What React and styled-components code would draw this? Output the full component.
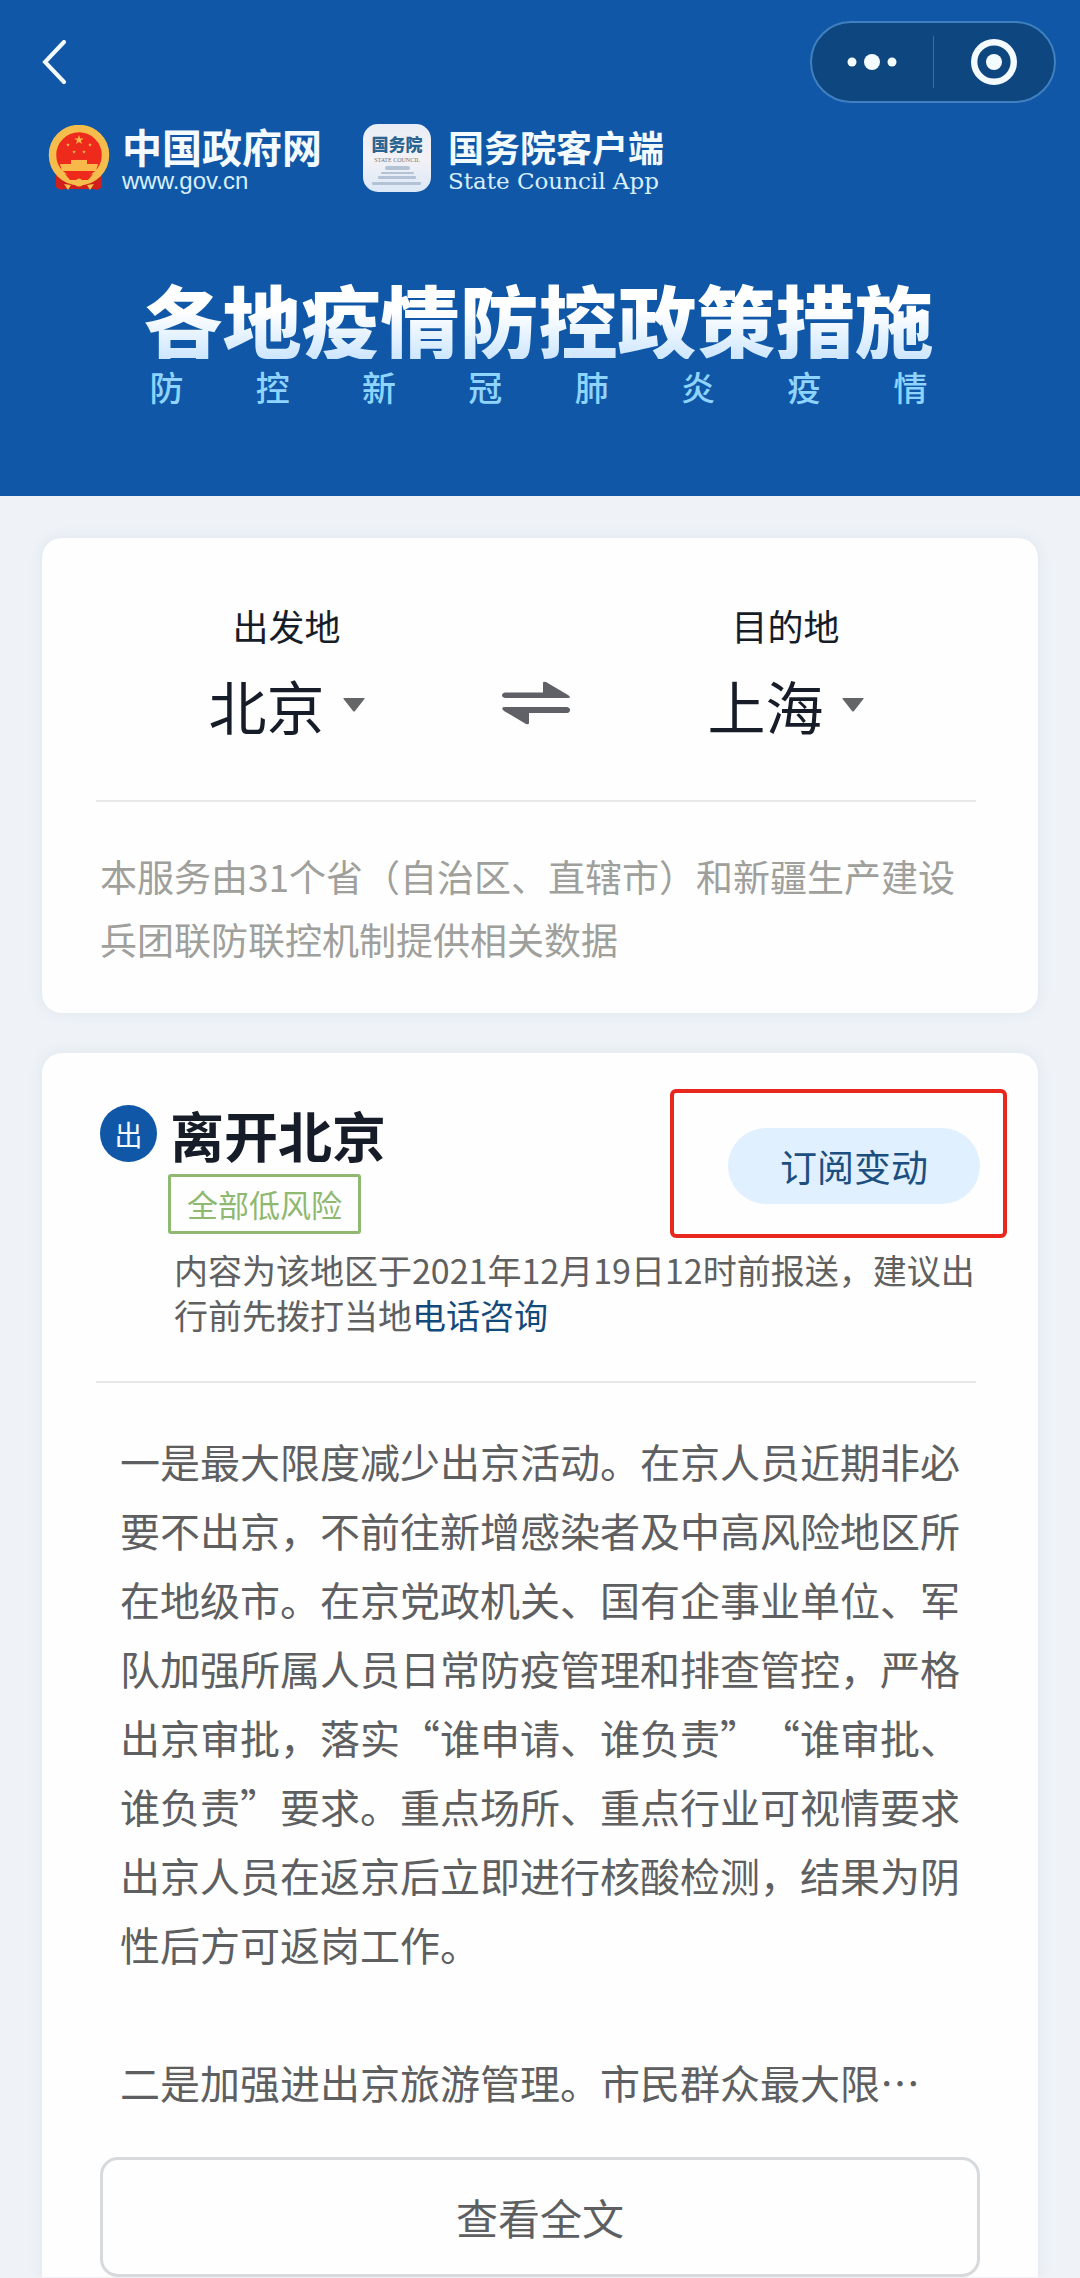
import React from 'react';
import styled, { createGlobalStyle } from 'styled-components';

const GlobalStyle = createGlobalStyle`
    * {
        box-sizing: border-box;
    }

    body {
        margin: 0;
        background-color: #eff3f8;
        color: #161d28;
        font-family: "Noto Sans CJK SC", "Noto Sans", sans-serif;
        text-spacing-trim: space-all;
    }

    button {
        font-family: inherit;
        cursor: pointer;
    }

    h1, h2, p {
        margin: 0;
    }
`;

const Header = styled.header`
    padding: 21px 24px 87px 42px;
    background-color: #1058a7;
    color: #f4fbff;
`;

const NavBar = styled.nav`
    display: flex;
    align-items: center;
    justify-content: space-between;
`;

const IconButton = styled.button`
    display: flex;
    align-items: center;
    justify-content: center;
    padding: 0;
    border: none;
    background: none;
    color: inherit;
`;

const Capsule = styled.div`
    display: flex;
    align-items: center;
    width: 246px;
    height: 82px;
    border: 2px solid #4080c0;
    border-radius: 41px;
    background-color: #0e467f;

    ${IconButton} {
        flex: 1;
        height: 52px;
    }

    ${IconButton} + ${IconButton} {
        border-left: 1px solid #3a6c9f;
    }
`;

const Brands = styled.div`
    display: flex;
    align-items: center;
    height: 68px;
    margin-top: 21px;
    padding-left: 6px;
`;

const Brand = styled.div`
    display: flex;
    align-items: center;
    gap: ${props => props.$gap}px;
    margin-right: 41px;
`;

const BrandText = styled.div`
    padding-top: 4px;
`;

const BrandName = styled.div`
    font-size: ${props => props.$size}px;
    font-weight: 700;
    line-height: 42px;
`;

const BrandSub = styled.div`
    font-family: ${props => (props.$serif ? '"DejaVu Serif", serif' : '"Liberation Sans", sans-serif')};
    font-size: ${props => (props.$serif ? 23 : 24)}px;
    line-height: 28px;
    color: #d8efff;
`;

const Banner = styled.div`
    display: flex;
    flex-direction: column;
    align-items: center;
    gap: 6px;
    margin-top: 87px;
    padding-right: 21px;
`;

const BannerTitle = styled.h1`
    font-size: 79px;
    font-weight: 900;
    line-height: 80px;
    color: transparent;
    background: linear-gradient(#ffffff 40%, #cde6ff);
    background-clip: text;
`;

const BannerSub = styled.p`
    display: flex;
    justify-content: space-between;
    width: 778px;
    font-size: 34px;
    font-weight: 500;
    line-height: 44px;
    color: #8fd4ff;
`;

const Main = styled.main`
    display: flex;
    flex-direction: column;
    gap: 40px;
    padding: 42px 42px 0;
`;

const Card = styled.section`
    padding: ${props => props.$padding};
    border-radius: ${props => (props.$open ? '20px 20px 0 0' : '20px')};
    background-color: #fefefe;
    box-shadow: 0 0 12px 2px rgba(205, 215, 228, 0.4);
`;

const Divider = styled.hr`
    height: 2px;
    margin: 0 4px 0 -4px;
    border: none;
    background-color: #e6e8ea;
`;

const Route = styled.div`
    display: grid;
    grid-template-columns: 1fr 126px 1fr;
    align-items: end;
    padding: 0 8px 59px 0;
`;

const Place = styled.div`
    display: flex;
    flex-direction: column;
    align-items: center;
    gap: 20px;
    font-size: 36px;
    line-height: 48px;
`;

const PlaceButton = styled.button`
    display: flex;
    align-items: center;
    gap: 18px;
    padding: 0;
    border: none;
    background: none;
    color: inherit;
    font-size: 58px;
    line-height: 72px;
`;

const SwapButton = styled(IconButton)`
    height: 76px;
    color: #606166;
`;

const Notice = styled.p`
    padding-top: 43px;
    font-size: 37px;
    line-height: 63px;
    color: #9f9f9b;
`;

const PolicyHead = styled.div`
    display: grid;
    grid-template-columns: 57px 1fr;
    column-gap: 11px;
    padding-bottom: 44px;
`;

const DirectionMark = styled.span`
    display: flex;
    align-items: center;
    justify-content: center;
    width: 57px;
    height: 57px;
    border-radius: 50%;
    background-color: #1058a7;
    color: #f4fbff;
    font-size: 28px;
    line-height: 40px;
`;

const TitleRow = styled.div`
    display: flex;
    justify-content: space-between;
    align-items: flex-start;
`;

const PolicyTitle = styled.h2`
    padding-left: 2px;
    font-size: 54px;
    font-weight: 700;
    line-height: 60px;
`;

const RiskTag = styled.span`
    display: inline-block;
    margin-top: 9px;
    padding: 6px 16px;
    border: 3px solid #8fb870;
    border-radius: 3px;
    color: #8fb870;
    font-size: 31px;
    line-height: 42px;
`;

const SubscribeArea = styled.div`
    position: relative;
    margin-top: 23px;
`;

const SubscribeButton = styled.button`
    width: 252px;
    height: 76px;
    padding: 0;
    border: none;
    border-radius: 38px;
    background-color: #e0f0ff;
    color: #1c4f7f;
    font-size: 37px;
    line-height: 48px;
`;

const Highlight = styled.div`
    position: absolute;
    inset: -39px -27px -34px -58px;
    border: 4px solid #e8281f;
    border-radius: 6px;
    pointer-events: none;
`;

const ReportNote = styled.p`
    padding: 13px 0 0 6px;
    font-size: 34px;
    line-height: 45px;
    color: #606060;
`;

const PhoneLink = styled.a`
    color: #134a7c;
    text-decoration: none;
`;

const Article = styled.div`
    padding: 44px 20px 40px;
    font-size: 40px;
    line-height: 69px;
    color: #5e5f61;

    p + p {
        margin-top: 69px;
    }
`;

const MoreButton = styled.button`
    display: block;
    width: 100%;
    height: 120px;
    padding: 0;
    border: 3px solid #d6dadd;
    border-radius: 18px;
    background-color: #fefefe;
    color: #5e5f61;
    font-size: 42px;
    line-height: 56px;
`;

const BackIcon = () => (
    <svg width="25" height="44" viewBox="0 0 25 44" fill="none" stroke="currentColor" strokeWidth="4" strokeLinecap="round">
        <path d="M22 2 3 22l19 20" />
    </svg>
)

const MoreIcon = () => (
    <svg width="50" height="18" viewBox="0 0 50 18" fill="currentColor">
        <circle cx="5" cy="9" r="4.5" />
        <circle cx="25" cy="9" r="8" />
        <circle cx="45" cy="9" r="4.5" />
    </svg>
)

const CloseIcon = () => (
    <svg width="46" height="46" viewBox="0 0 46 46">
        <circle cx="23" cy="23" r="19.8" fill="none" stroke="currentColor" strokeWidth="6.4" />
        <circle cx="23" cy="23" r="8" fill="currentColor" />
    </svg>
)

const CaretIcon = () => (
    <svg width="22" height="14" viewBox="0 0 22 14" fill="#646567">
        <path d="M1 0h20q1 0 .4 1L12 13q-1 1-2 0L.6 1Q0 0 1 0z" />
    </svg>
)

const SwapIcon = () => (
    <svg width="68" height="44" viewBox="0 0 68 44" fill="currentColor">
        <path d="M3 11.500h38V2q0-2 3-1l22 13q4 3 0 3H3q-3-.5-3-2.700t3-2.800z" />
        <path d="M65 32H27v10q0 2-3 1L2 30q-4-4 1-4h62q3 .5 3 3t-3 3z" />
    </svg>
)

const star = (cx, cy, r) => {
    const points = []
    for (let i = 0; i < 10; i++) {
        const radius = i % 2 ? r * 0.4 : r
        const angle = (Math.PI / 5) * i - Math.PI / 2
        points.push(`${cx + radius * Math.cos(angle)},${cy + radius * Math.sin(angle)}`)
    }
    return points.join(' ')
}

const EmblemIcon = () => (
    <svg width="62" height="66" viewBox="0 0 62 66">
        <path d="M8 46h46v16q-4 4-8 2H16q-4 2-8-2z" fill="#d0201c" />
        <circle cx="31" cy="30" r="26.500" fill="#ee2a1d" stroke="#f5bd4c" strokeWidth="7.500" />
        <g fill="#f9b94a">
            <polygon points={star(31, 15, 5)} />
            <polygon points={star(20, 20, 2)} />
            <polygon points={star(42, 20, 2)} />
            <polygon points={star(26, 27, 2)} />
            <polygon points={star(36, 27, 2)} />
            <path d="M23 35h16v4h11l-2 7H14l-2-7h11z" />
        </g>
        <path d="M17 49q14 4 28 0l-5 6H22z" fill="#ee2a1d" />
        <path d="M20 57l7-1q4-5 8 0l7 1-7 3q-4 3-8 0z" fill="#f5bd4c" />
        <path d="M16 59l7 1-3 5zM46 59l-7 1 3 5z" fill="#f5bd4c" />
    </svg>
)

const CouncilIcon = () => (
    <svg width="68" height="68" viewBox="0 0 68 68">
        <defs>
            <linearGradient id="council" x1="0" y1="0" x2="0" y2="1">
                <stop offset="0" stopColor="#e9edf5" />
                <stop offset="0.5" stopColor="#f3f2f6" />
                <stop offset="1" stopColor="#dce8f7" />
            </linearGradient>
        </defs>
        <rect width="68" height="68" rx="15" fill="url(#council)" />
        <text x="34" y="27" textAnchor="middle" fontSize="17" fontWeight="900" fill="#2b6590">国务院</text>
        <text x="34" y="38" textAnchor="middle" fontSize="6" fontFamily="Liberation Serif, serif" fill="#6d7580">STATE COUNCIL</text>
        <g fill="#b4c2d6">
            <rect x="22" y="42" width="25" height="4" rx="2" />
            <rect x="18" y="48" width="33" height="2" rx="1" />
            <rect x="15" y="52" width="38" height="3" rx="1" />
            <rect x="9" y="58" width="49" height="3" rx="1" />
        </g>
    </svg>
)

const PlacePicker = (props) => {
    return (
        <Place>
            <span id={props.id}>{props.label}</span>
            <PlaceButton aria-describedby={props.id}>
                {props.city}
                <CaretIcon />
            </PlaceButton>
        </Place>
    )
}

const App = () => {
    return (
        <>
            <GlobalStyle />
            <Header>
                <NavBar>
                    <IconButton aria-label="返回"><BackIcon /></IconButton>
                    <Capsule>
                        <IconButton aria-label="更多"><MoreIcon /></IconButton>
                        <IconButton aria-label="关闭"><CloseIcon /></IconButton>
                    </Capsule>
                </NavBar>
                <Brands>
                    <Brand $gap={12}>
                        <EmblemIcon />
                        <BrandText>
                            <BrandName $size={40}>中国政府网</BrandName>
                            <BrandSub>www.gov.cn</BrandSub>
                        </BrandText>
                    </Brand>
                    <Brand $gap={17}>
                        <CouncilIcon />
                        <BrandText>
                            <BrandName $size={36}>国务院客户端</BrandName>
                            <BrandSub $serif>State Council App</BrandSub>
                        </BrandText>
                    </Brand>
                </Brands>
                <Banner>
                    <BannerTitle>各地疫情防控政策措施</BannerTitle>
                    <BannerSub>
                        {[...'防控新冠肺炎疫情'].map((char) => <span key={char}>{char}</span>)}
                    </BannerSub>
                </Banner>
            </Header>

            <Main>
                <Card $padding="63px 58px 42px">
                    <Route>
                        <PlacePicker id="from" label="出发地" city="北京" />
                        <SwapButton aria-label="交换"><SwapIcon /></SwapButton>
                        <PlacePicker id="to" label="目的地" city="上海" />
                    </Route>
                    <Divider />
                    <Notice>本服务由31个省（自治区、直辖市）和新疆生产建设兵团联防联控机制提供相关数据</Notice>
                </Card>

                <Card $open $padding="52px 58px 0">
                    <PolicyHead>
                        <DirectionMark>出</DirectionMark>
                        <div>
                            <TitleRow>
                                <div>
                                    <PolicyTitle>离开北京</PolicyTitle>
                                    <RiskTag>全部低风险</RiskTag>
                                </div>
                                <SubscribeArea>
                                    <SubscribeButton>订阅变动</SubscribeButton>
                                    <Highlight />
                                </SubscribeArea>
                            </TitleRow>
                            <ReportNote>
                                内容为该地区于2021年12月19日12时前报送，建议出行前先拨打当地<PhoneLink href="#phone">电话咨询</PhoneLink>
                            </ReportNote>
                        </div>
                    </PolicyHead>
                    <Divider />
                    <Article>
                        <p>一是最大限度减少出京活动。在京人员近期非必要不出京，不前往新增感染者及中高风险地区所在地级市。在京党政机关、国有企事业单位、军队加强所属人员日常防疫管理和排查管控，严格出京审批，落实“谁申请、谁负责”“谁审批、谁负责”要求。重点场所、重点行业可视情要求出京人员在返京后立即进行核酸检测，结果为阴性后方可返岗工作。</p>
                        <p>二是加强进出京旅游管理。市民群众最大限…</p>
                    </Article>
                    <MoreButton>查看全文</MoreButton>
                </Card>
            </Main>
        </>
    )
}

export default App;
